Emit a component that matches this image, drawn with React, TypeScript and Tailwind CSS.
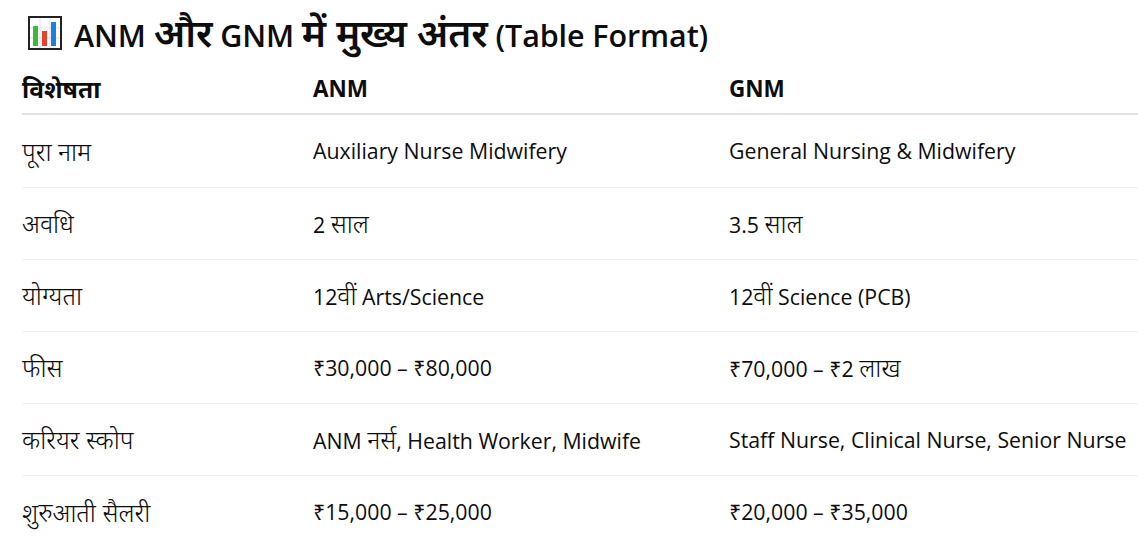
import React from 'react';

const rows = [
  { label: 'पूरा नाम', anm: 'Auxiliary Nurse Midwifery', gnm: 'General Nursing & Midwifery' },
  { label: 'अवधि', anm: '2 साल', gnm: '3.5 साल' },
  { label: 'योग्यता', anm: '12वीं Arts/Science', gnm: '12वीं Science (PCB)' },
  { label: 'फीस', anm: '₹30,000 – ₹80,000', gnm: '₹70,000 – ₹2 लाख' },
  { label: 'करियर स्कोप', anm: 'ANM नर्स, Health Worker, Midwife', gnm: 'Staff Nurse, Clinical Nurse, Senior Nurse' },
  { label: 'शुरुआती सैलरी', anm: '₹15,000 – ₹25,000', gnm: '₹20,000 – ₹35,000' },
];

// Devanagari glyphs in the fallback font run small, so bump them up
const DEVA = /([\u0900-\u097F](?:[\u0900-\u097F\s]*[\u0900-\u097F])?)/;

function Mixed({ text, devaClass }: { text: string; devaClass: string }) {
  return (
    <>
      {text.split(DEVA).map((part, i) =>
        i % 2 === 1 ? (
          <span key={i} className={devaClass}>
            {part}
          </span>
        ) : (
          <React.Fragment key={i}>{part}</React.Fragment>
        ),
      )}
    </>
  );
}

function ChartIcon() {
  return (
    <svg width="34" height="34" viewBox="0 0 34 34" className="shrink-0">
      <rect x="1" y="1" width="32" height="32" fill="#fff" stroke="#222" strokeWidth="2" />
      <g stroke="#e2e2e2" strokeWidth="1">
        <line x1="12" y1="2" x2="12" y2="32" />
        <line x1="22" y1="2" x2="22" y2="32" />
        <line x1="2" y1="12" x2="32" y2="12" />
        <line x1="2" y1="22" x2="32" y2="22" />
      </g>
      <rect x="5" y="10" width="5" height="20" fill="#3cb83c" />
      <rect x="14" y="15" width="5" height="15" fill="#e8402a" />
      <rect x="23" y="6" width="5" height="24" fill="#1e7fe0" />
    </svg>
  );
}

export default function App() {
  return (
    <div
      className="w-[1138px] h-[543px] overflow-hidden bg-white text-[#0d0d0d] pl-[22px]"
      style={{ fontFamily: '"Open Sans", "Noto Sans", sans-serif' }}
    >
      {/* title */}
      <div className="h-[62px] pt-[3px] flex items-center gap-[12px] pl-[6px]">
        <ChartIcon />
        <h1 className="text-[30.5px] leading-none font-semibold whitespace-nowrap tracking-[-0.1px]">
          <Mixed text="ANM और GNM में मुख्य अंतर (Table Format)" devaClass="text-[38.5px] font-semibold" />
        </h1>
      </div>

      {/* header */}
      <div className="grid grid-cols-[291px_416px_1fr] h-[53px] pt-[4px] items-center border-b-2 border-[#e3e3e3] text-[22.5px] font-bold leading-none">
        <div>
          <Mixed text="विशेषता" devaClass="text-[24.5px]" />
        </div>
        <div>ANM</div>
        <div>GNM</div>
      </div>

      {rows.map((r, i) => (
        <div
          key={r.label}
          className={`grid grid-cols-[291px_416px_1fr] items-center text-[21.3px] leading-none whitespace-nowrap ${
            i === 0 ? 'h-[73px]' : 'h-[72px]'
          } ${i < rows.length - 1 ? 'border-b border-[#efefef]' : ''}`}
        >
          <div>
            <Mixed text={r.label} devaClass="text-[25px] font-light" />
          </div>
          <div>
            <Mixed text={r.anm} devaClass="text-[25px] font-light" />
          </div>
          <div>
            <Mixed text={r.gnm} devaClass="text-[25px] font-light" />
          </div>
        </div>
      ))}
    </div>
  );
}
